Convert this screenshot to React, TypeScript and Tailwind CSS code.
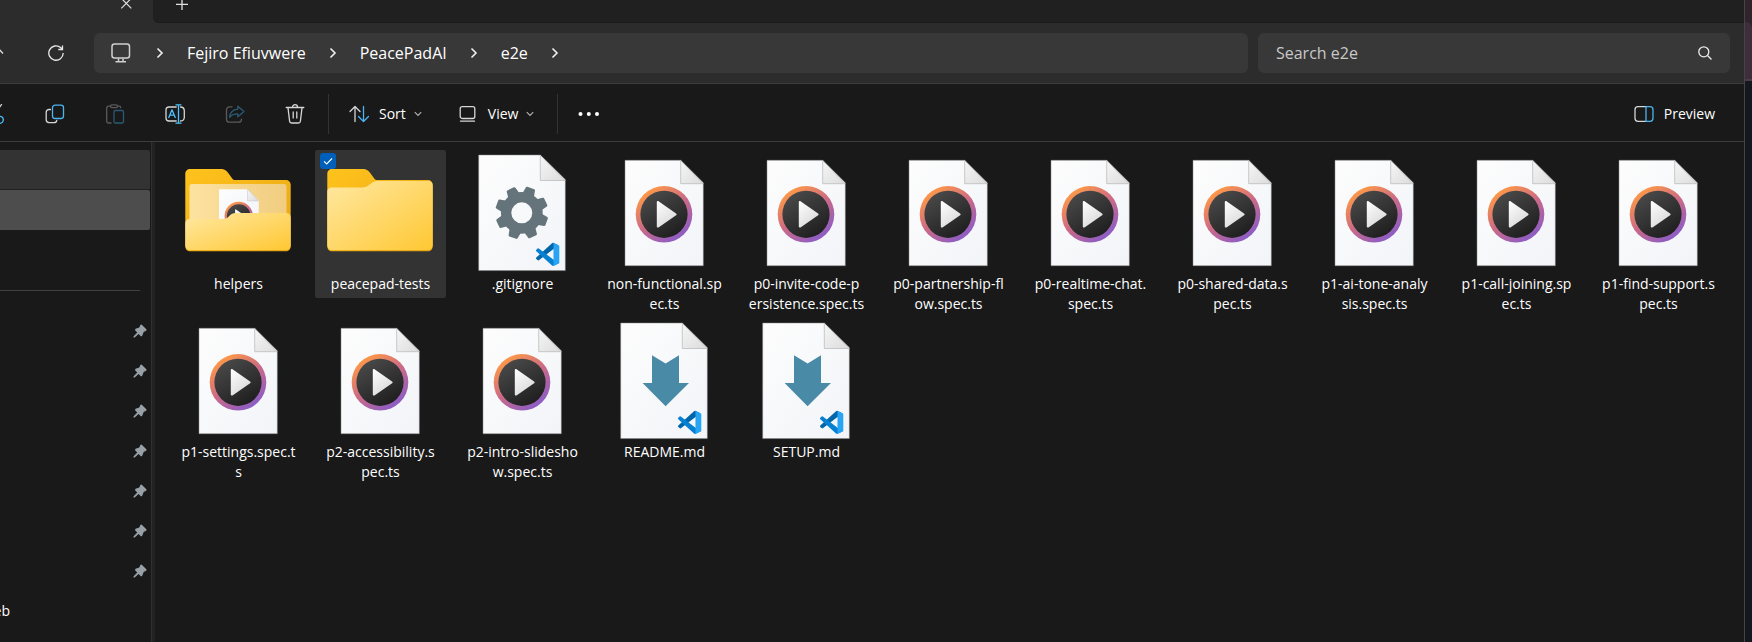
import type { ReactNode } from "react";

type Kind = "folder" | "folder-open" | "media" | "config" | "markdown";
type Entry = { kind: Kind; label: string; selected?: boolean };

const entries: Entry[] = [
  { kind: "folder-open", label: "helpers" },
  { kind: "folder", label: "peacepad-tests", selected: true },
  { kind: "config", label: ".gitignore" },
  { kind: "media", label: "non-functional.sp\nec.ts" },
  { kind: "media", label: "p0-invite-code-p\nersistence.spec.ts" },
  { kind: "media", label: "p0-partnership-fl\now.spec.ts" },
  { kind: "media", label: "p0-realtime-chat.\nspec.ts" },
  { kind: "media", label: "p0-shared-data.s\npec.ts" },
  { kind: "media", label: "p1-ai-tone-analy\nsis.spec.ts" },
  { kind: "media", label: "p1-call-joining.sp\nec.ts" },
  { kind: "media", label: "p1-find-support.s\npec.ts" },
  { kind: "media", label: "p1-settings.spec.t\ns" },
  { kind: "media", label: "p2-accessibility.s\npec.ts" },
  { kind: "media", label: "p2-intro-slidesho\nw.spec.ts" },
  { kind: "markdown", label: "README.md" },
  { kind: "markdown", label: "SETUP.md" },
];

const crumbs = ["Fejiro Efiuvwere", "PeacePadAI", "e2e"];
const pins = [0, 1, 2, 3, 4, 5, 6];

function Gradients() {
  return (
    <svg className="absolute h-0 w-0" aria-hidden="true">
      <defs>
        <linearGradient id="paper" x1="0" y1="0" x2="1" y2="1">
          <stop offset="0" stopColor="#fdfdfd" />
          <stop offset="1" stopColor="#f2f4f8" />
        </linearGradient>
        <linearGradient id="fold" x1="0" y1="0" x2="1" y2="1">
          <stop offset="0" stopColor="#f6f6f6" />
          <stop offset="1" stopColor="#dcdcdc" />
        </linearGradient>
        <linearGradient id="ring" x1="0.15" y1="0.1" x2="0.75" y2="0.95">
          <stop offset="0" stopColor="#ff9a45" />
          <stop offset="0.5" stopColor="#cc6a86" />
          <stop offset="1" stopColor="#8b5cc7" />
        </linearGradient>
        <linearGradient id="disc" x1="0.2" y1="0" x2="0.8" y2="1">
          <stop offset="0" stopColor="#4b4b4b" />
          <stop offset="1" stopColor="#1c1c1c" />
        </linearGradient>
        <linearGradient id="play" x1="0" y1="0" x2="0.6" y2="1">
          <stop offset="0" stopColor="#ffffff" />
          <stop offset="1" stopColor="#dadada" />
        </linearGradient>
        <linearGradient id="front" x1="0" y1="0" x2="1" y2="1">
          <stop offset="0" stopColor="#ffe8a2" />
          <stop offset="1" stopColor="#ffc833" />
        </linearGradient>
        <linearGradient id="back" x1="0" y1="0" x2="1" y2="1">
          <stop offset="0" stopColor="#ffc31c" />
          <stop offset="1" stopColor="#e6a415" />
        </linearGradient>
        <linearGradient id="inner" x1="0" y1="0" x2="1" y2="0">
          <stop offset="0" stopColor="#fde2a0" />
          <stop offset="1" stopColor="#f0cd80" />
        </linearGradient>
      </defs>
    </svg>
  );
}

function PlayDisc({ cx, cy, s }: { cx: number; cy: number; s: number }) {
  return (
    <g transform={`translate(${cx} ${cy}) scale(${s})`}>
      <circle r="28.3" fill="url(#ring)" />
      <circle r="23.6" fill="url(#disc)" />
      <path
        d="M-7.2-12.2v24.4c0 .9 1 1.4 1.7.9L12.1.9c.7-.5.7-1.3 0-1.8L-5.5-13.1c-.7-.5-1.7 0-1.7.9z"
        fill="url(#play)"
      />
    </g>
  );
}

function MediaArt() {
  return (
    <>
      <path d="M26 10.3h55.7l22.6 22.4v83H26z" fill="url(#paper)" stroke="#8a8a8a" strokeWidth="0.5" />
      <path d="M81.7 10.5v23.2h22.4z" fill="url(#fold)" stroke="#bdbdbd" strokeWidth="0.8" />
      <PlayDisc cx={65} cy={64.3} s={1} />
    </>
  );
}

function LargePage({ children }: { children: ReactNode }) {
  return (
    <>
      <path d="M21.7 5h61.6l25 24.6v91H21.7z" fill="url(#paper)" stroke="#8a8a8a" strokeWidth="0.5" />
      <path d="M83.3 5.3v25.2h24.8z" fill="url(#fold)" stroke="#bdbdbd" strokeWidth="0.8" />
      {children}
      <g transform="translate(79 92.7) scale(0.233)">
        <path
          d="M96.46 10.8 75.86.87a6.23 6.23 0 0 0-7.1 1.21L1.3 63.6a4.17 4.17 0 0 0 0 6.16l5.5 5.01a4.17 4.17 0 0 0 5.33.24L93.38 13.4c2.73-2.07 6.65-.12 6.65 3.3v-.24a6.25 6.25 0 0 0-3.57-5.66z"
          fill="#0066ab"
        />
        <path
          d="M96.46 89.2l-20.6 9.92a6.23 6.23 0 0 1-7.1-1.21L1.3 36.4a4.17 4.17 0 0 1 0-6.16l5.5-5.01a4.17 4.17 0 0 1 5.33-.24l81.25 61.63c2.73 2.07 6.65.12 6.65-3.3v.24a6.25 6.25 0 0 1-3.57 5.64z"
          fill="#0580d2"
        />
        <path
          d="M75.86 99.13a6.23 6.23 0 0 1-7.11-1.21c2.31 2.31 6.25.67 6.25-2.59V4.67c0-3.26-3.94-4.9-6.25-2.59a6.23 6.23 0 0 1 7.11-1.21l20.6 9.91a6.25 6.25 0 0 1 3.54 5.63v67.18a6.25 6.25 0 0 1-3.54 5.63z"
          fill="#27a4f3"
        />
      </g>
    </>
  );
}

function GearArt() {
  const teeth = [0, 1, 2, 3, 4, 5, 6, 7];
  return (
    <LargePage>
      <g transform="translate(64.8 62.8)" fill="#64747a">
        {teeth.map((i) => (
          <path
            key={i}
            transform={`rotate(${20 + i * 45})`}
            d="M-6.2-18l1.4-7.4c.1-.6.6-1 1.2-1h7.2c.6 0 1.100.4 1.2 1l1.4 7.4z"
          />
        ))}
        <circle r="15.7" fill="none" stroke="#64747a" strokeWidth="10.4" />
      </g>
    </LargePage>
  );
}

function MarkdownArt() {
  return (
    <LargePage>
      <path d="M53 37.300l13.600 8.300L80 37.300V65h10L66.600 88.300 43.600 65H53z" fill="#498ba7" />
    </LargePage>
  );
}

const folderBack =
  "M12.300 24c0-3 2-5 5-5h30c4.500 0 6.500 2 8.500 4.800l3.400 4.600c.9 1.200 1.800 1.600 3.300 1.600h50.200c3 0 5 2 5 5v61.300c0 3-2 5-5 5H17.300c-3 0-5-2-5-5z";

function FolderArt({ open }: { open: boolean }) {
  return (
    <>
      <path d={folderBack} fill="url(#back)" />
      {open ? (
        <>
          <path d="M19 34h92a2.500 2.500 0 0 1 2.500 2.500V80h-97V36.500A2.500 2.500 0 0 1 19 34z" fill="url(#inner)" />
          <path d="M46 39.300h28.500l11.300 11.500V72H46z" fill="url(#paper)" />
          <path d="M74.500 39.400v11.500h11.200z" fill="url(#fold)" stroke="#c4c4c4" strokeWidth="0.5" />
          <PlayDisc cx={65.700} cy={66} s={0.5} />
          <path
            d="M12.300 73.500c0-2.800 1.700-4.500 4.500-4.500h33c3 0 4.500-1 6.200-2.700 2.200-2.300 3.800-3.300 6.600-3.300h50.600c2.800 0 4.500 1.700 4.500 4.500V95c0 3-2 5-5 5H17.300c-3 0-5-2-5-5z"
            fill="url(#front)"
          />
        </>
      ) : (
        <path
          d="M12.300 42c0-2.800 1.700-4.500 4.500-4.500h30c3.500 0 5.500-1 8-3 2.700-2.300 4.500-3.500 8-3.500h50.400c2.800 0 4.500 1.700 4.500 4.500V95c0 3-2 5-5 5H17.300c-3 0-5-2-5-5z"
          fill="url(#front)"
        />
      )}
    </>
  );
}

function Art({ kind }: { kind: Kind }) {
  return (
    <svg viewBox="0 0 131 124" className="block h-[124px] w-full" aria-hidden="true">
      {kind === "folder" && <FolderArt open={false} />}
      {kind === "folder-open" && <FolderArt open />}
      {kind === "media" && <MediaArt />}
      {kind === "config" && <GearArt />}
      {kind === "markdown" && <MarkdownArt />}
    </svg>
  );
}

function Icon({ children }: { children: ReactNode }) {
  return (
    <svg
      viewBox="0 0 20 20"
      className="h-5 w-5 shrink-0"
      fill="none"
      stroke="#d6d6d6"
      strokeWidth="1.3"
      strokeLinecap="round"
      strokeLinejoin="round"
      aria-hidden="true"
    >
      {children}
    </svg>
  );
}

function Chevron() {
  return (
    <span className="flex w-[54px] justify-center">
      <svg viewBox="0 0 10 12" className="h-3 w-2.5" fill="none" stroke="#f0f0f0" strokeWidth="1.6" aria-hidden="true">
        <path d="M2.500 1.500 7 6l-4.500 4.500" />
      </svg>
    </span>
  );
}

function Caret() {
  return (
    <svg viewBox="0 0 8 6" className="ml-2 h-1.5 w-2" fill="none" stroke="#b0b0b0" strokeWidth="1.200" aria-hidden="true">
      <path d="M.8 1.200 4 4.400l3.200-3.200" />
    </svg>
  );
}

function Tool({ name, children }: { name: string; children: ReactNode }) {
  return (
    <button type="button" aria-label={name} className="flex h-10 w-[60px] items-center justify-center">
      <Icon>{children}</Icon>
    </button>
  );
}

function TabStrip() {
  return (
    <div className="flex h-[23px] bg-[#2c2c2c]">
      <div className="flex w-[153px] justify-end pr-5">
        <button type="button" aria-label="Close tab" className="flex h-[9px] w-3.5 items-end overflow-hidden">
          <svg viewBox="0 0 14 14" className="h-3.5 w-3.5 shrink-0" stroke="#e0e0e0" strokeWidth="1.200" aria-hidden="true">
            <path d="M2.300 3.300l10 10M12.300 3.300l-10 10" />
          </svg>
        </button>
      </div>
      <div className="flex flex-1 rounded-bl-md border-b border-[#1b1b1b] bg-[#202020] pl-[22px]">
        <button type="button" aria-label="New tab" className="flex h-2.5 w-3.5 items-end overflow-hidden">
          <svg viewBox="0 0 14 14" className="h-3.5 w-3.5 shrink-0" stroke="#e0e0e0" strokeWidth="1.300" aria-hidden="true">
            <path d="M7 2v12M1 8.300h12" />
          </svg>
        </button>
      </div>
    </div>
  );
}

function AddressRow() {
  return (
    <div className="flex items-center border-b border-[#3c3c3c] bg-[#2c2c2c] py-2.5 pr-3.5">
      <button type="button" aria-label="Up" className="flex w-[26px] justify-end overflow-hidden pr-[21px]">
        <svg viewBox="0 0 16 16" className="h-4 w-4 shrink-0" fill="none" stroke="#e0e0e0" strokeWidth="1.300" aria-hidden="true">
          <path d="M8 15V2M2 8.500 8 2l6 6.500" />
        </svg>
      </button>
      <button type="button" aria-label="Refresh" className="flex w-[60px] justify-center">
        <svg viewBox="0 0 16 16" className="h-4 w-4" fill="none" stroke="#e8e8e8" strokeWidth="1.300" aria-hidden="true">
          <path d="M15.200 8A7.200 7.200 0 1 1 12.600 2.500L14.300 4.300M14.500.5v4h-4.200" />
        </svg>
      </button>
      <div className="ml-2 min-w-0 flex-[22]">
        <nav aria-label="Path" className="flex h-10 items-center rounded-md bg-[#383838] pl-[17px] text-base">
          <svg viewBox="0 0 22 20" className="h-5 w-[22px] shrink-0" fill="none" stroke="#cfcfcf" strokeWidth="1.500" aria-hidden="true">
            <rect x="1" y="1" width="17.500" height="14" rx="2.500" />
            <path d="M7.500 15.500v3M12 15.500v3M4.500 18.700h10.500" />
          </svg>
          <Chevron />
          {crumbs.map((c) => (
            <span key={c} className="flex items-center">
              <a href="#" className="whitespace-nowrap text-white">
                {c}
              </a>
              <Chevron />
            </span>
          ))}
        </nav>
      </div>
      <div className="ml-2.5 min-w-0 flex-[9]">
        <label className="flex h-10 items-center rounded-md bg-[#383838] pr-[18px] pl-[18px]">
          <input
            type="text"
            aria-label="Search e2e"
            placeholder="Search e2e"
            className="min-w-0 flex-1 bg-transparent text-base text-white outline-none placeholder:text-[#c8c8c8]"
          />
          <svg viewBox="0 0 14 14" className="h-3.5 w-3.5" fill="none" stroke="#ececec" strokeWidth="1.300" aria-hidden="true">
            <circle cx="5.800" cy="5.800" r="5" />
            <path d="M9.500 9.500l4 4" />
          </svg>
        </label>
      </div>
    </div>
  );
}

function Toolbar() {
  return (
    <div className="flex h-[58px] items-center border-b border-[#3c3c3c] pt-0.5 text-sm text-white">
      <button type="button" aria-label="Cut" className="flex h-10 w-[25px] items-center justify-end overflow-hidden pr-5">
        <Icon>
          <path d="M16.500.5 8 13M3.500.5 12 13" />
          <circle cx="14.800" cy="15.800" r="3.500" stroke="#4cc2ff" />
          <circle cx="5.200" cy="15.800" r="3.500" stroke="#4cc2ff" />
        </Icon>
      </button>
      <Tool name="Copy">
        <path d="M5.500 5.500H4A2.800 2.800 0 0 0 1.200 8.300v7.500A2.800 2.800 0 0 0 4 18.600h5a2.800 2.800 0 0 0 2.800-2.300" />
        <rect x="7.500" y="1.200" width="11" height="13.300" rx="2.500" stroke="#4cb4f0" />
      </Tool>
      <Tool name="Paste">
        <g stroke="#5a5a5a">
          <path d="M5.500 2.200H3.500A1.800 1.800 0 0 0 1.700 4v13.200A1.800 1.800 0 0 0 3.500 19H6M12.500 2.200h1.800A1.500 1.500 0 0 1 15.700 3.700" />
          <rect x="5.500" y=".8" width="7" height="2.800" rx="1.400" />
        </g>
        <rect x="9" y="6.500" width="9.500" height="12.500" rx="1.600" stroke="#2a5a75" />
      </Tool>
      <Tool name="Rename">
        <path d="M11.200 3H4A3 3 0 0 0 1 6v8a3 3 0 0 0 3 3h7.200M15.500 3A3.800 3.800 0 0 1 19.300 6.500v7A3.800 3.800 0 0 1 15.500 17" />
        <path d="M3.800 13.500 7 5.800l3.200 7.700M5 11.200h4M13.500 .8v18.400M11 .8h5M11 19.200h5" stroke="#4cc2ff" />
      </Tool>
      <Tool name="Share">
        <path d="M7 2.800H4.500A3 3 0 0 0 1.500 5.800v9.400a3 3 0 0 0 3 3h9a3 3 0 0 0 3-3" stroke="#5a5a5a" />
        <path d="M12.800 2.200 19 7.500l-6.200 5.300V9.800c-4 0-6.500 1-8.300 3.700.5-4.300 3-8 8.300-8.300z" stroke="#2a5a75" />
      </Tool>
      <Tool name="Delete">
        <path d="M1.200 3.500h17.600M7.500 3.200a2.500 2.500 0 0 1 5 0M3 3.800l1.600 13.400A2 2 0 0 0 6.600 19h6.800a2 2 0 0 0 2-1.800L17 3.800M8.200 8v6M11.800 8v6" />
      </Tool>
      <div className="ml-[3px] h-10 w-px bg-[#333]" />
      <button type="button" className="ml-5 flex items-center">
        <Icon>
          <path d="M6 17.500V2.500M1 7.500l5-5 5 5" />
          <path d="M14.500 2.500v15M9.500 12.500l5 5 5-5" stroke="#4cb4f0" />
        </Icon>
        <span className="ml-2.5">Sort</span>
        <Caret />
      </button>
      <button type="button" className="ml-9 flex items-center">
        <Icon>
          <rect x="2.200" y="2.700" width="14.600" height="11.800" rx="2" />
          <path d="M2.500 17.200h14" />
        </Icon>
        <span className="ml-2.5">View</span>
        <Caret />
      </button>
      <div className="ml-[23px] h-10 w-px bg-[#333]" />
      <button type="button" aria-label="See more" className="ml-5 flex items-center">
        <svg viewBox="0 0 22 4" className="h-1 w-[22px]" fill="#ffffff" aria-hidden="true">
          <circle cx="2.500" cy="2" r="2" />
          <circle cx="10.800" cy="2" r="2" />
          <circle cx="19" cy="2" r="2" />
        </svg>
      </button>
      <button type="button" className="mr-[29px] ml-auto flex items-center">
        <Icon>
          <path d="M12 2.700H4A3 3 0 0 0 1 5.700v8.600a3 3 0 0 0 3 3h8" />
          <path d="M12 2.700h4a3 3 0 0 1 3 3v8.600a3 3 0 0 1-3 3h-4z" stroke="#4cb4f0" />
        </Icon>
        <span className="ml-2.5">Preview</span>
      </button>
    </div>
  );
}

function Sidebar() {
  return (
    <aside className="w-[151px] shrink-0 pt-2">
      <div className="h-10 w-[150px] rounded-r-xs border-b border-[#222] bg-[#333]" />
      <div className="h-10 w-[150px] rounded-r-xs bg-[#4d4d4d]" />
      <hr className="mt-[60px] mr-[11px] mb-5 border-[#404040]" />
      <ul>
        {pins.map((p) => (
          <li key={p} className="flex h-10 items-center justify-end pr-1">
            <svg viewBox="0 0 14 14" className="h-3.5 w-3.5" fill="#97a0a6" aria-hidden="true">
              <path d="M8.500.5 13.600 5.600 13 6.900 10.800 7.800 9.200 11.800 8 12.500 5.600 9.900 1.700 13.500.5 13.600.5 12.400 4.200 8.500 1.900 6 2.600 4.700 6.300 3.600 7.300 1z" />
            </svg>
          </li>
        ))}
      </ul>
      <div className="flex h-10 w-[10px] items-center justify-end overflow-hidden text-sm text-white">eb</div>
    </aside>
  );
}

function Tile({ entry }: { entry: Entry }) {
  return (
    <li className={entry.selected ? "relative rounded-xs bg-[#333]" : "relative"}>
      <button type="button" className="block w-full pb-1 text-center text-sm leading-5 text-white">
        <Art kind={entry.kind} />
        <span className="block whitespace-pre-line">{entry.label}</span>
      </button>
      {entry.selected && (
        <>
          <input
            type="checkbox"
            defaultChecked
            aria-label={entry.label}
            className="absolute top-[3px] left-[5px] h-4 w-4 appearance-none rounded-[3px] bg-[#005fb8]"
          />
          <svg
            viewBox="0 0 16 16"
            className="pointer-events-none absolute top-[3px] left-[5px] h-4 w-4"
            fill="none"
            stroke="#ffffff"
            strokeWidth="1.100"
            aria-hidden="true"
          >
            <path d="M4 8.300 6.700 11l5.300-5.500" />
          </svg>
        </>
      )}
    </li>
  );
}

export default function App() {
  return (
    <div className="flex min-h-screen bg-[#191919] font-['Open_Sans','Noto_Sans',sans-serif]">
      <Gradients />
      <div className="flex min-w-0 flex-1 flex-col border-r border-[#444]">
        <header>
          <TabStrip />
          <AddressRow />
          <Toolbar />
        </header>
        <div className="flex flex-1">
          <Sidebar />
          <div className="w-1 shrink-0 border-l border-[#303030] bg-[#222]" />
          <main className="min-w-0 flex-1 pt-2 pl-[18px]">
            <ul className="grid grid-cols-[repeat(auto-fill,131px)] items-start gap-x-[11px]">
              {entries.map((e) => (
                <Tile key={e.label} entry={e} />
              ))}
            </ul>
          </main>
        </div>
      </div>
      <div className="flex w-[7px] shrink-0 flex-col bg-[#151720]">
        <div className="bg-[#30232c] pt-[22px]">
          <div className="h-[59px] rounded-tr-md border-b-2 border-[#4a3d48] bg-[#3e2d3b]" />
        </div>
      </div>
    </div>
  );
}
